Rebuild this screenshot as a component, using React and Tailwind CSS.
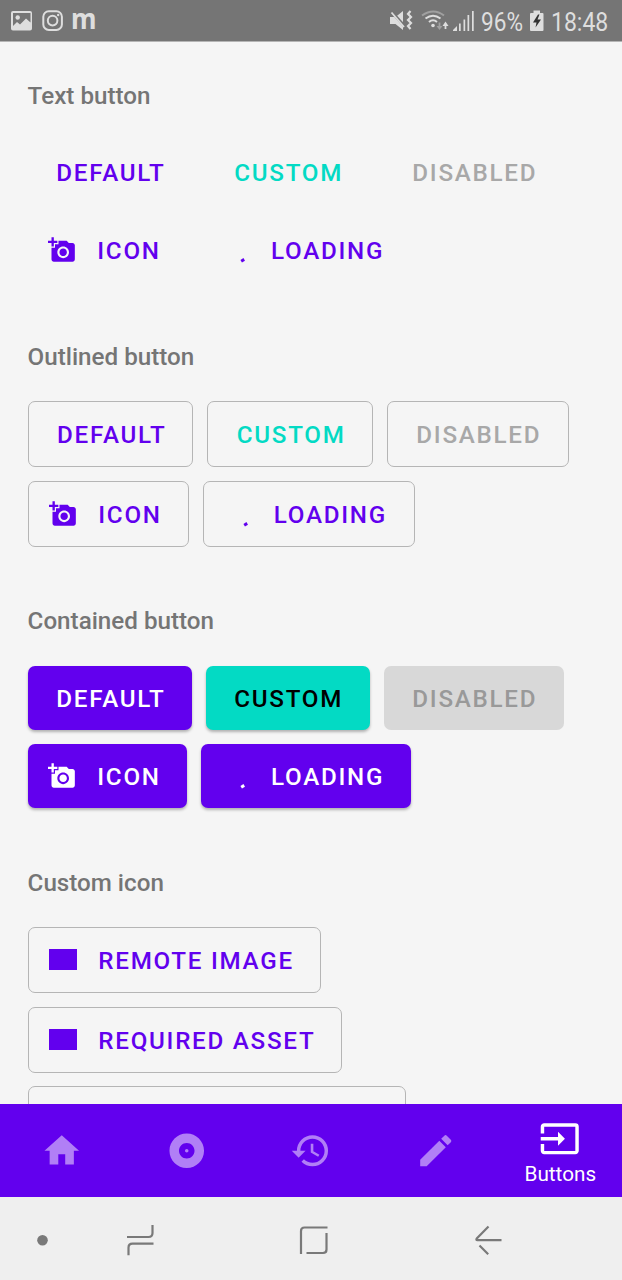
import { MdAddAPhoto, MdHome, MdAlbum, MdHistory, MdEdit, MdInput } from 'react-icons/md';

function Section({ title, className, titleClass, children }) {
  return (
    <section className={className}>
      <h2 className={`h-[28px] whitespace-nowrap text-[24.2px] font-medium leading-[28px] text-[#757575] ${titleClass}`}>{title}</h2>
      {children}
    </section>
  );
}

function Row({ className = '', children }) {
  return <div className={`flex gap-[14px] ${className}`}>{children}</div>;
}

const modes = {
  text: 'h-[64px] pl-[28.7px]',
  outlined: 'h-[66px] pl-[28.5px] border border-[#b5b5b5]',
  contained: 'h-[64px] pl-[28.7px] shadow-[0_2px_3px_rgba(0,0,0,0.28)]',
  flat: 'h-[64px] pl-[28.7px] bg-[#d8d8d8]',
};

const modesWithIcon = {
  text: 'h-[64px] pl-[20.5px]',
  outlined: 'h-[66px] pl-[20.5px] border border-[#b5b5b5]',
  contained: 'h-[64px] pl-[20.5px] shadow-[0_2px_3px_rgba(0,0,0,0.28)]',
};

function Button({ mode, icon, className, children }) {
  const base = icon ? modesWithIcon[mode] : modes[mode];
  return (
    <button className={`flex shrink-0 items-center rounded-[7px] ${base} ${className}`}>
      {icon && <span className="mr-[21.2px] flex size-[28px] shrink-0 items-center justify-center">{icon}</span>}
      <span className="whitespace-nowrap pt-[2px] text-[24.2px] font-medium leading-[28px] tracking-[1.73px]">{children}</span>
    </button>
  );
}

const Photo = () => <MdAddAPhoto className="-mt-px size-[28px]" />;

const Spinner = () => (
  <svg viewBox="0 0 28 28" className="size-[28px]">
    <path d="M19.2 25.2 L22.2 23.4" stroke="currentColor" strokeWidth="3" />
  </svg>
);

const Picture = () => <span className="-mt-px block h-[21px] w-[28px] bg-[#6200ee]" />;

function StatusBar() {
  return (
    <header className="flex h-[41px] shrink-0 items-start bg-[#757575] text-[#dedede]">
      <svg className="h-[41px] w-[110px]" viewBox="0 0 110 41" fill="none">
        <path fillRule="evenodd" fill="currentColor" d="M13 11h17q2 0 2 2v15.500q0 2-2 2H13q-2 0-2-2V13q0-2 2-2zM13 13v13l4-4 3 2.500 6-6 4.500 4V13z" />
        <circle cx="17.700" cy="17.500" r="2.200" fill="currentColor" />
        <rect x="43.300" y="11.300" width="18.600" height="18.600" rx="5.500" stroke="currentColor" strokeWidth="2" />
        <circle cx="52.600" cy="20.600" r="4.800" stroke="currentColor" strokeWidth="2" />
        <circle cx="58.200" cy="15" r="1.200" fill="currentColor" />
        <text x="71" y="28.500" fill="currentColor" fontFamily="Noto Sans, sans-serif" fontWeight="700" fontSize="28.500" textLength="25.500" lengthAdjust="spacingAndGlyphs">m</text>
      </svg>
      <div className="flex-1" />
      <svg className="h-[41px] w-[90px]" viewBox="387 0 90 41" fill="none">
        <path fill="currentColor" d="M390 17h5.500l7.500-6v19l-7.500-6H390z" />
        <path d="M391 11l16 18" stroke="#757575" strokeWidth="3" />
        <path d="M391.500 12.500L404 27" stroke="currentColor" strokeWidth="1.800" />
        <path d="M410.500 11l-2.500 3 3 3-3 3 3 3-3 3 2.500 3" stroke="currentColor" strokeWidth="2.200" />
        <g strokeWidth="2">
          <path d="M422 15.500q11.500-8 22 0" stroke="#a0a0a0" />
          <path d="M425.500 18.500q7.500-5.500 15 0M429 22q4-3.500 8 0" stroke="currentColor" />
        </g>
        <circle cx="433" cy="25.500" r="1.800" fill="currentColor" />
        <path d="M439.500 22.500v4" stroke="#a0a0a0" strokeWidth="1.800" />
        <path d="M436.500 26l3 4 3-4z" fill="#a0a0a0" />
        <path d="M445.500 29v-5" stroke="currentColor" strokeWidth="1.800" />
        <path d="M442.500 26l3-4.500 3 4.500z" fill="currentColor" />
        <path fill="currentColor" d="M453 31v-1l4-4v5zM459 23.500h1.700V31h-1.700zM463.500 19.500h1.700V31h-1.700zM467.500 15h1.700V31h-1.700zM472 11h1.700V31h-1.700z" />
      </svg>
      <span className="ml-[4px] mt-[6.5px] w-[48px] whitespace-nowrap text-[26px] leading-[30px]">
        <span className="inline-block origin-left scale-x-[0.87]">96%</span>
      </span>
      <svg className="h-[41px] w-[15px]" viewBox="529.500 0 15 41">
        <path fill="currentColor" d="M534 10.500h6.500V13h2.500q1 0 1 1v16q0 1-1 1h-11.500q-1 0-1-1V14q0-1 1-1h2.500z" />
        <path fill="#333" d="M538.500 14.500l-5 8h3.500l-1 5 5.500-8H538l2-5z" />
      </svg>
      <span className="ml-[7px] mt-[6.5px] w-[71px] whitespace-nowrap text-[26px] leading-[30px]">
        <span className="inline-block origin-left scale-x-[0.885]">18:48</span>
      </span>
    </header>
  );
}

function Tab({ icon: Icon, label }) {
  return (
    <div className={`flex flex-1 flex-col items-center ${label ? 'pt-[14px] text-white' : 'justify-center pt-px text-[#b17ff6]'}`}>
      <Icon className="size-[41.5px] shrink-0" />
      {label && <span className="mt-[2px] pl-px text-[20.7px] leading-[24px]">{label}</span>}
    </div>
  );
}

function SystemBar() {
  return (
    <footer className="h-[83px] shrink-0 bg-[#efefef]">
      <svg className="h-[83px] w-full" viewBox="0 1197 622 83" fill="none" stroke="#797979" strokeWidth="2.200">
        <circle cx="42.500" cy="1240.300" r="5.300" fill="#797979" stroke="none" />
        <path d="M127 1237h21.500q4 0 4-4v-8M153.500 1243.700h-21q-4 0-4 4v7.500" />
        <path d="M301 1254v-23q0-3.500 3.500-3.500H327.500M326.500 1233v16.500q0 3.500-3.500 3.500H306.500" />
        <path d="M501.500 1240.200h-24q-2 0-.5-2l11.500-11.700M479.500 1245.500l8.700 8.700" />
      </svg>
    </footer>
  );
}

export default function App() {
  return (
    <div className="flex h-[1280px] w-[622px] flex-col overflow-hidden bg-[#f5f5f5] font-['Roboto',sans-serif]">
      <StatusBar />
      <main className="min-h-0 flex-1 overflow-hidden border-t border-[#b5b5b5] px-[27.6px] pt-[40px] text-[#6200ee]">
        <Section title="Text button" titleClass="mb-[30px]">
          <Row>
            <Button mode="text" className="w-[164px]">DEFAULT</Button>
            <Button mode="text" className="w-[164px] text-[#03dac4]">CUSTOM</Button>
            <Button mode="text" className="w-[181px] text-[#a8a8a8]">DISABLED</Button>
          </Row>
          <Row className="mt-[14px]">
            <Button mode="text" icon={<Photo />} className="w-[159.8px]">ICON</Button>
            <Button mode="text" icon={<Spinner />} className="w-[210px]">LOADING</Button>
          </Row>
        </Section>
        <Section title="Outlined button" className="mt-[61px]" titleClass="mb-[30px]">
          <Row>
            <Button mode="outlined" className="w-[165.6px]">DEFAULT</Button>
            <Button mode="outlined" className="w-[165.6px] text-[#03dac4]">CUSTOM</Button>
            <Button mode="outlined" className="w-[182px] text-[#a8a8a8]">DISABLED</Button>
          </Row>
          <Row className="mt-[14px]">
            <Button mode="outlined" icon={<Photo />} className="w-[161.5px]">ICON</Button>
            <Button mode="outlined" icon={<Spinner />} className="w-[211.5px]">LOADING</Button>
          </Row>
        </Section>
        <Section title="Contained button" className="mt-[60px]" titleClass="mb-[31px]">
          <Row>
            <Button mode="contained" className="w-[164px] bg-[#6200ee] text-white">DEFAULT</Button>
            <Button mode="contained" className="w-[164px] bg-[#03dac4] text-black">CUSTOM</Button>
            <Button mode="flat" className="w-[180.4px] text-[#999]">DISABLED</Button>
          </Row>
          <Row className="mt-[14px]">
            <Button mode="contained" icon={<Photo />} className="w-[159.8px] bg-[#6200ee] text-white">ICON</Button>
            <Button mode="contained" icon={<Spinner />} className="w-[210px] bg-[#6200ee] text-white">LOADING</Button>
          </Row>
        </Section>
        <Section title="Custom icon" className="mt-[61px]" titleClass="mb-[30px]">
          <div className="flex flex-col items-start gap-[13.6px]">
            <Button mode="outlined" icon={<Picture />} className="w-[293.6px]">REMOTE IMAGE</Button>
            <Button mode="outlined" icon={<Picture />} className="w-[314.2px]">REQUIRED ASSET</Button>
            <div className="h-[66px] w-[378px] rounded-[7px] border border-[#b5b5b5]" />
          </div>
        </Section>
      </main>
      <nav className="flex h-[93px] shrink-0 bg-[#6200ee]">
        <Tab icon={MdHome} />
        <Tab icon={MdAlbum} />
        <Tab icon={MdHistory} />
        <Tab icon={MdEdit} />
        <Tab icon={MdInput} label="Buttons" />
      </nav>
      <SystemBar />
    </div>
  );
}
